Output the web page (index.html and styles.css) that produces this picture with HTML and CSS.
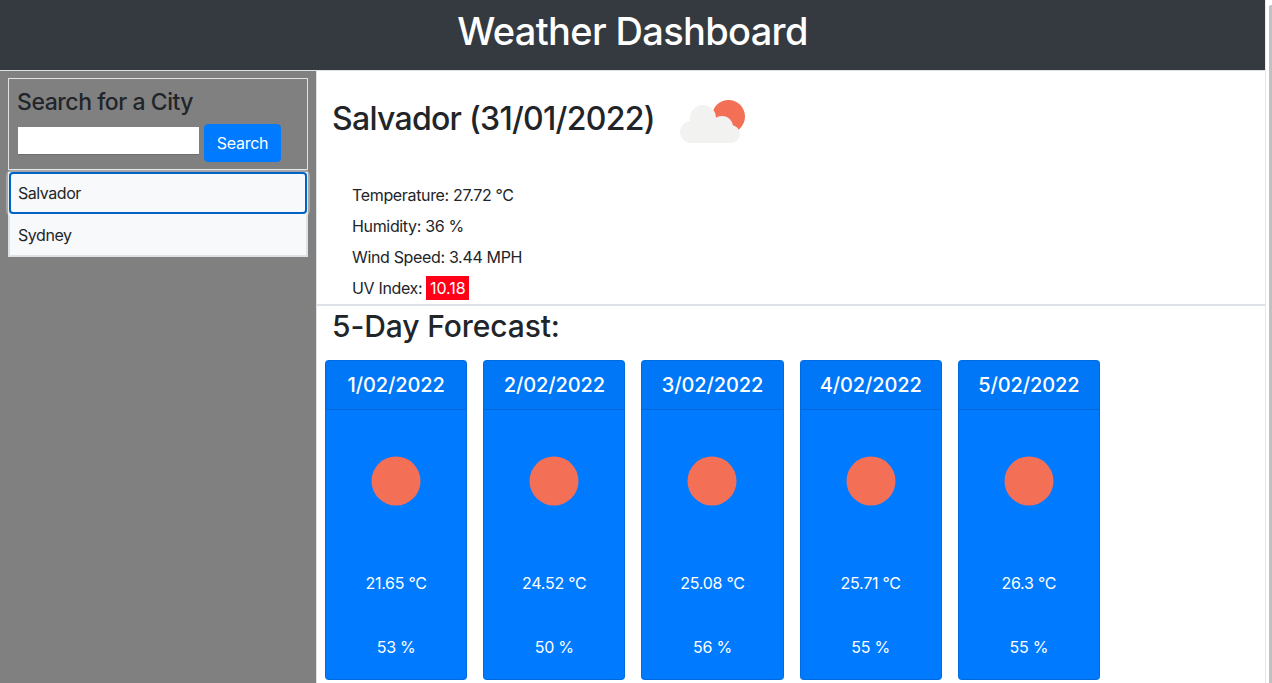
FILE: index.html
```html
<!DOCTYPE html>
<html lang="en">
<head>
<meta charset="utf-8">
<title>Weather Dashboard</title>
<link rel="stylesheet" href="styles.css">
</head>
<body>
<div class="page">
  <header class="topbar"><h1>Weather Dashboard</h1></header>
  <div class="layout">
    <aside class="sidebar">
      <form class="search">
        <h2>Search for a City</h2>
        <div class="search-row">
          <input class="search-input" type="text" aria-label="City">
          <button class="search-btn" type="button">Search</button>
        </div>
      </form>
      <ul class="history">
        <li class="history-item active">Salvador</li>
        <li class="history-item">Sydney</li>
      </ul>
    </aside>
    <main class="content">
      <section class="today">
        <div class="today-head">
          <h2>Salvador (31/01/2022)</h2>
          <svg class="icon-big" viewBox="0 0 66 44" aria-hidden="true">
            <circle cx="48.500" cy="16.500" r="16.500" fill="#f36f56"/>
            <g fill="#f2f2f1">
              <circle cx="11" cy="32" r="11"/>
              <circle cx="23" cy="18" r="13"/>
              <circle cx="42" cy="27" r="11"/>
              <circle cx="51" cy="34" r="9"/>
              <rect x="11" y="26" width="40" height="17"/>
            </g>
          </svg>
        </div>
        <div class="stats">
          <p>Temperature: 27.72 °C</p>
          <p>Humidity: 36 %</p>
          <p>Wind Speed: 3.44 MPH</p>
          <p>UV Index: <span class="uv">10.18</span></p>
        </div>
      </section>
      <section class="forecast">
        <h2>5-Day Forecast:</h2>
        <div class="cards">
          <article class="card"><h3>1/02/2022</h3><div class="card-body"><svg class="icon-sun" viewBox="0 0 50 50" aria-hidden="true"><circle cx="25" cy="25" r="24.500" fill="#f36f56"/></svg><p>21.65 °C</p><p>53 %</p></div></article>
          <article class="card"><h3>2/02/2022</h3><div class="card-body"><svg class="icon-sun" viewBox="0 0 50 50" aria-hidden="true"><circle cx="25" cy="25" r="24.500" fill="#f36f56"/></svg><p>24.52 °C</p><p>50 %</p></div></article>
          <article class="card"><h3>3/02/2022</h3><div class="card-body"><svg class="icon-sun" viewBox="0 0 50 50" aria-hidden="true"><circle cx="25" cy="25" r="24.500" fill="#f36f56"/></svg><p>25.08 °C</p><p>56 %</p></div></article>
          <article class="card"><h3>4/02/2022</h3><div class="card-body"><svg class="icon-sun" viewBox="0 0 50 50" aria-hidden="true"><circle cx="25" cy="25" r="24.500" fill="#f36f56"/></svg><p>25.71 °C</p><p>55 %</p></div></article>
          <article class="card"><h3>5/02/2022</h3><div class="card-body"><svg class="icon-sun" viewBox="0 0 50 50" aria-hidden="true"><circle cx="25" cy="25" r="24.500" fill="#f36f56"/></svg><p>26.3 °C</p><p>55 %</p></div></article>
        </div>
      </section>
    </main>
  </div>
</div>
<div class="scrollbar"><div class="scroll-thumb"></div></div>
</body>
</html>
```

FILE: styles.css
```css
* { box-sizing: border-box; }
html, body { margin: 0; height: 683px; overflow: hidden; }
body {
  font-family: Inter, "Liberation Sans", sans-serif;
  font-size: 16px;
  line-height: 24px;
  letter-spacing: -0.34px;
  color: #212529;
  background: #fff;
  display: flex;
}
.page { width: 1265px; height: 683px; display: flex; flex-direction: column; flex: none; }
.topbar {
  height: 71px;
  background: #343a40;
  color: #fff;
  text-align: center;
  border-bottom: 1px solid #dee2e6;
  flex: none;
}
.topbar h1 { margin: 0; font-size: 38px; font-weight: 500; line-height: 62px; letter-spacing: -0.65px; }
.layout { flex: 1; display: flex; min-height: 0; }
.sidebar {
  width: 317px;
  flex: none;
  background: #808080;
  padding: 7px 8px 0;
  border-right: 1px solid #dee2e6;
}
.search {
  width: 300px;
  height: 92px;
  border: 1px solid #dee2e6;
  padding: 9px 8px 0;
}
.search h2 { margin: 0; font-size: 23px; font-weight: 500; line-height: 29px; letter-spacing: -0.45px; }
.search-row { display: flex; align-items: flex-start; gap: 5px; margin: 7px 0 0 1px; }
.search-input { width: 181px; height: 28px; margin-top: 3px; border: 0; border-bottom: 1px solid #6e6e6e; background: #fff; padding: 0; }
.search-btn {
  width: 77px; height: 38px;
  background: #007bff; color: #fff;
  border: 1px solid #007bff; border-radius: 4px;
  font: inherit; letter-spacing: -0.3px; padding: 0;
}
.history {
  list-style: none;
  margin: 0;
  padding: 0;
  width: 300px;
  background: #f8f9fa;
  border: 2px solid #dee2e6;
  border-top-width: 0;
}
.history-item { height: 41px; padding: 0 8px; display: flex; align-items: center; background: #f8f9fa; letter-spacing: -0.45px; }
.history-item.active {
  border: 2px solid #0062c4;
  border-radius: 4px;
  padding: 0 7px;
  margin: 2px -1px 0;
  height: 42px;
  box-shadow: 0 0 0 3px rgba(255, 255, 255, 0.3);
}
.content { flex: 1; min-width: 0; }
.today { height: 235px; border-bottom: 2px solid #dee2e6; padding-left: 15px; }
.today-head { display: flex; align-items: flex-start; height: 112px; }
.today-head h2 { margin: 29px 0 0; font-size: 32px; font-weight: 500; line-height: 38px; letter-spacing: -0.72px; }
.icon-big { width: 66px; height: 44px; margin: 29px 0 0 25px; }
.stats { padding-left: 20px; }
.stats p { margin: 0 0 7px; }
.uv { background: #ff0018; color: #fff; padding: 0 3.5px; letter-spacing: 0; display: inline-block; }
.forecast h2 { margin: 0; padding: 1px 0 0 15px; font-size: 30px; font-weight: 500; line-height: 38px; letter-spacing: -0.1px; }
.cards { display: flex; gap: 16px; padding-left: 8px; margin-top: 15px; }
.card { width: 142.2px; height: 320px; background: #007bff; color: #fff; border: 1px solid rgba(0, 0, 0, 0.125); border-radius: 4px; text-align: center; overflow: hidden; }
.card h3 { margin: 0; height: 49px; font-size: 20px; font-weight: 500; line-height: 48px; letter-spacing: -0.12px; background: rgba(0, 0, 0, 0.03); border-bottom: 1px solid rgba(0, 0, 0, 0.125); }
.card-body { display: flex; flex-direction: column; align-items: center; padding-top: 46px; }
.card-body p { margin: 0; line-height: 24px; letter-spacing: -0.25px; }
.icon-sun { width: 50px; height: 50px; margin: 0 0 65px 0; }
.card-body p + p { margin-top: 40px; }
.scrollbar { width: 7px; height: 683px; flex: none; display: flex; background: #fff; border-left: 1px solid #e8e8e8; padding: 5px 0 0 3px; }
.scroll-thumb { flex: 1; background: #c1c1c1; border-radius: 2px 0 0 0; }
```
